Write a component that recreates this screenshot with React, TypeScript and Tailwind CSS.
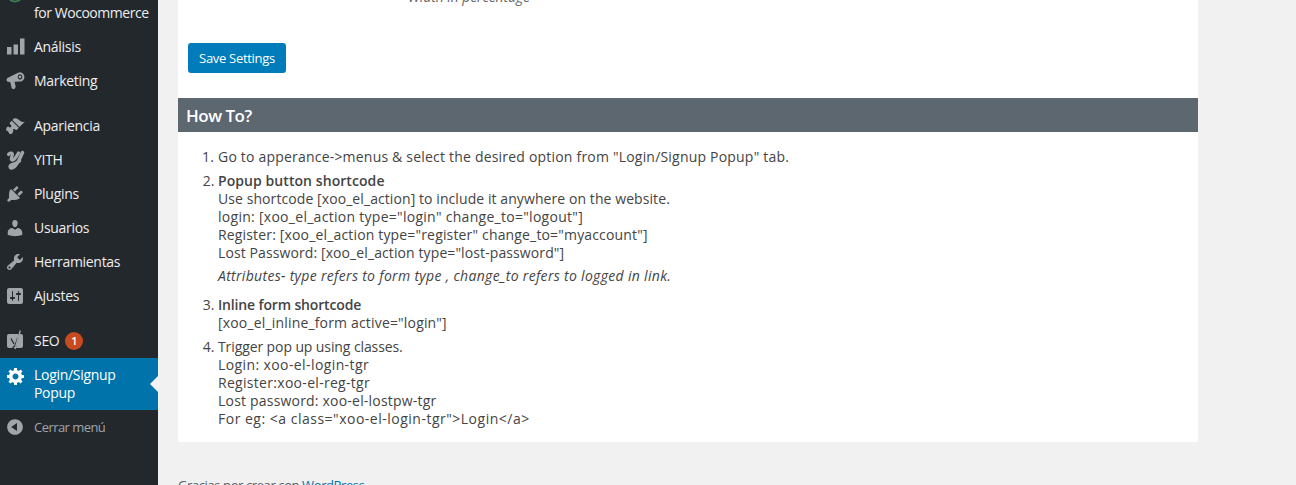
import React from "react";

const P = ({ d }: { d: string }) => <path d={d} />;

const Icon = ({ children }: { children: React.ReactNode }) => (
  <svg viewBox="0 0 20 20" className="w-5 h-5 fill-current shrink-0">{children}</svg>
);

const icons: Record<string, React.ReactNode> = {
  analytics: (
    <svg viewBox="0 0 20 20" className="w-[20px] h-[20px] fill-current shrink-0">
      <rect x="2" y="10" width="4.500" height="7.500" />
      <rect x="8.500" y="7.500" width="4.500" height="10" />
      <rect x="15" y="1.500" width="4.500" height="16" />
    </svg>
  ),
  marketing: (
    <Icon>
      <path fillRule="evenodd" d="M15 1.200c2.700 0 4.400 2.200 4.400 4.700S17.500 10.600 15 10.600L9.500 10.800 10.700 15.700 9.400 18.200 6.800 17.500 5.300 11.200 3 10.800C2 10.500 1.500 9.700 1.600 8.700 1.700 7.800 2.200 7.100 3 6.800L12.500 2zM15 3.300C13.700 3.300 12.800 4.500 12.800 5.900 12.800 7.300 13.700 8.500 15 8.500 16.300 8.500 17.300 7.300 17.300 5.900 17.300 4.500 16.300 3.300 15 3.300z" />
      <circle cx="15" cy="5.900" r="1.300" />
    </Icon>
  ),
  appearance: (
    <Icon>
      <P d="M14.480 11.060L7.410 3.990l1.500-1.500c.5-.56 2.300-.47 3.510.32 1.210.8 1.430 1.280 2.910 2.100 1.180.64 2.450 1.260 4.450.85zm-.71.71L6.700 4.700 4.930 6.470c-.39.39-.39 1.020 0 1.410l1.060 1.060c.59.56.59 1.530 0 2.120-.58.56-1.530.56-2.120 0l-.35-.35c-.35-.35-1.030-.21-1.410.35C1.500 11.700 1 13 1.300 14.700l1.500.2 1.800 3.100c1.100.3 2.200-.3 2.900-1.100.6-.7 1-1.900.6-2.900-.2-.5.1-1.100.7-1.100.8 0 1.300.4 1.800.9.400.4 1 .4 1.400 0z" />
    </Icon>
  ),
  yith: (
    <svg viewBox="0 0 20 20" className="w-5 h-5 shrink-0 fill-none stroke-current">
      <path strokeWidth="3.200" strokeLinecap="round" d="M3.500 4.500C4.500 3 6.500 2.500 7.300 3.700 8 5 6 7.500 6.300 9.300 6.600 10.800 8.500 10.300 10.300 8 11.800 6 12.800 4.500 13.500 3" />
      <path strokeWidth="3.400" strokeLinecap="round" d="M17.500 2.500C16 6 14 10.500 12 13.500 10.500 16 8.500 18.500 6 18 4.700 17.500 4.800 15.500 6.200 15 8.500 14.300 12 13 14.500 11" />
    </svg>
  ),
  plugins: (
    <Icon>
      <P d="M13.110 4.360L9.870 7.600 8 5.730l3.240-3.240c.35-.34 1.050-.2 1.560.32.52.51.66 1.210.31 1.550zm-8 1.770l.91-1.120 9.010 9.010-1.190.84c-.71.71-2.630 1.160-3.820 1.160H6.140L4.900 17.260c-.59.59-1.540.59-2.120 0-.59-.58-.59-1.530 0-2.120l1.240-1.240v-3.880c0-1.130.4-3.190 1.090-3.890zm7.260 3.970l3.240-3.240c.34-.35 1.040-.21 1.550.31.52.51.66 1.210.31 1.550l-3.240 3.250z" />
    </Icon>
  ),
  users: (
    <Icon>
      <P d="M10 9.250c-2.270 0-2.730-3.440-2.730-3.440C7 4.020 7.820 2 9.970 2c2.160 0 2.980 2.020 2.710 3.810 0 0-.41 3.440-2.680 3.440zm0 2.570L12.720 10c2.390 0 4.520 2.330 4.520 4.530v2.490s-3.650 1.130-7.240 1.130c-3.650 0-7.240-1.130-7.240-1.130v-2.490c0-2.250 1.940-4.480 4.470-4.480z" />
    </Icon>
  ),
  tools: (
    <Icon>
      <P d="M16.680 9.770c-1.340 1.340-3.300 1.670-4.950.99l-5.410 6.520c-.99.99-2.590.99-3.580 0s-.99-2.590 0-3.570l6.520-5.420c-.68-1.650-.35-3.610.99-4.950 1.280-1.280 3.120-1.620 4.720-1.060l-2.890 2.890 2.820 2.820 2.860-2.870c.53 1.580.18 3.390-1.080 4.650zM3.810 16.210c.4.39 1.040.39 1.430 0 .4-.4.4-1.040 0-1.430-.39-.4-1.030-.4-1.430 0-.39.39-.39 1.030 0 1.430z" />
    </Icon>
  ),
  settings: (
    <Icon>
      <P d="M18 16V4c0-1.100-.9-2-2-2H4c-1.100 0-2 .9-2 2v12c0 1.100.9 2 2 2h12c1.100 0 2-.9 2-2zM8 11h1c.55 0 1 .45 1 1s-.45 1-1 1H8v1.500c0 .28-.22.5-.5.5s-.5-.22-.5-.5V13H6c-.55 0-1-.45-1-1s.45-1 1-1h1V5.500c0-.28.22-.5.5-.5s.5.22.5.5V11zm5-2h-1c-.55 0-1-.45-1-1s.45-1 1-1h1V5.500c0-.28.22-.5.5-.5s.5.22.5.5V7h1c.55 0 1 .45 1 1s-.45 1-1 1h-1v5.500c0 .28-.22.5-.5.5s-.5-.22-.5-.5V9z" />
    </Icon>
  ),
  seo: (
    <svg viewBox="0 0 20 20" className="w-5 h-5 shrink-0 -translate-y-[1px]">
      <path className="fill-current" d="M4 4h9.500L11 18H4C2.800 18 2 17.200 2 16V6C2 4.800 2.800 4 4 4z" />
      <path className="fill-current" d="M14.500 4H16c1.100 0 2 .8 2 2v10c0 1.200-.9 2-2 2h-5z" />
      <path fill="none" stroke="#23282d" strokeWidth="1.300" d="M6 8.500l3 5.500M13 7.500l-3 8c-.4 1.300-1.300 1.800-2.500 1.800" />
      <path fill="none" stroke="#a0a5aa" strokeWidth="1.400" d="M15.300 .5L10 19" />
    </svg>
  ),
  gear: (
    <span className="ml-[1px]">
      <Icon>
        <P d="M18 12h-2.180c-.17.7-.44 1.350-.81 1.930l1.540 1.540-2.100 2.100-1.540-1.540c-.58.36-1.230.63-1.910.79V19H8v-2.180c-.68-.16-1.330-.43-1.910-.79l-1.540 1.540-2.120-2.120 1.540-1.540c-.36-.58-.63-1.230-.79-1.910H1V9.030h2.170c.16-.7.44-1.350.8-1.940L2.430 5.550l2.100-2.100 1.540 1.540c.58-.37 1.240-.64 1.930-.81V2h3v2.180c.68.16 1.330.43 1.910.79l1.540-1.540 2.120 2.120-1.540 1.540c.36.59.64 1.240.8 1.940H18V12zm-8.500 1.500c1.660 0 3-1.340 3-3s-1.340-3-3-3-3 1.340-3 3 1.340 3 3 3z" />
      </Icon>
    </span>
  ),
  collapse: (
    <Icon>
      <P d="M10 2.160c4.330 0 7.840 3.510 7.840 7.840s-3.510 7.840-7.840 7.840S2.160 14.330 2.160 10 5.710 2.160 10 2.160zm2 11.720V6.120L6.180 9.970z" />
    </Icon>
  ),
};

const Item = ({ icon, label, gap }: { icon: string; label: React.ReactNode; gap?: boolean }) => (
  <div className={`flex items-center h-[34px] pl-[5px] text-[#eeeeee] ${gap ? "mt-[11px]" : ""}`}>
    <span className="w-[29px] flex text-[#a0a5aa]">{icons[icon]}</span>
    <span className="leading-[18px]">{label}</span>
  </div>
);

const Sidebar = () => (
  <aside className="w-[158px] shrink-0 bg-[#23282d] pt-[4px] text-[14px] tracking-[-0.3px] overflow-hidden">
    <div className="relative flex items-center h-[26px] pb-[8px] pl-[34px] text-[#eeeeee] leading-[18px] whitespace-nowrap tracking-[-0.45px]">
      <svg viewBox="0 0 20 20" className="absolute left-[5px] top-[-20px] w-5 h-5 fill-none stroke-[#3f7d4f]" strokeWidth="2">
        <circle cx="10" cy="10" r="7.500" />
      </svg>
      for Wocoommerce
    </div>
    <Item icon="analytics" label="Análisis" />
    <Item icon="marketing" label="Marketing" />
    <Item icon="appearance" label="Apariencia" gap />
    <Item icon="yith" label="YITH" />
    <Item icon="plugins" label="Plugins" />
    <Item icon="users" label="Usuarios" />
    <Item icon="tools" label="Herramientas" />
    <Item icon="settings" label="Ajustes" />
    <div className="mt-[11px] flex items-center h-[34px] pl-[5px] text-[#eeeeee]">
      <span className="w-[29px] flex text-[#a0a5aa]">{icons.seo}</span>
      <span className="-translate-y-[1px]">SEO</span>
      <span className="ml-[6px] w-[18px] h-[18px] rounded-full bg-[#ca4a1f] text-white text-[11px] font-semibold flex items-center justify-center tracking-normal">1</span>
    </div>
    <div className="relative flex bg-[#0073aa] text-white py-[8px] pl-[5px] leading-[18px]">
      <span className="w-[29px] flex items-start">{icons.gear}</span>
      <span>Login/Signup<br />Popup</span>
      <span className="absolute right-0 top-[18px] w-0 h-0 border-y-[8px] border-y-transparent border-r-[8px] border-r-[#f1f1f1]" />
    </div>
    <div className="flex items-center h-[34px] pl-[5px] text-[#a0a5aa] text-[13px] tracking-[-0.55px]">
      <span className="w-[29px] flex">{icons.collapse}</span>
      <span className="translate-y-[1px]">Cerrar menú</span>
    </div>
  </aside>
);

const Settings = () => (
  <section className="bg-white h-[98px] shrink-0 pl-[10px]">
    <div className="pl-[220px] h-[43px] text-[14px] italic text-[#666666] leading-[18px] tracking-[-0.1px] -translate-y-[12px]">Width in percentage</div>
    <button className="block w-[98px] h-[30px] bg-[#007cba] rounded-[3px] text-white text-[13px] leading-[30px] text-center tracking-[-0.3px]">Save Settings</button>
  </section>
);

const HowTo = () => (
  <section className="bg-white h-[344px] shrink-0">
    <h2 className="bg-[#5d6770] h-[34px] pl-[8px] text-white text-[17px] font-semibold leading-[36px] tracking-[-0.5px]">How To?</h2>
    <ol className="list-decimal pl-[40px] pt-[16px] text-[14px] leading-[18px] text-[#444444] whitespace-nowrap">
      <li className="mb-[6px] tracking-[0.2px]">Go to apperance-&gt;menus &amp; select the desired option from "Login/Signup Popup" tab.</li>
      <li className="mb-[6px]">
        <strong className="block font-semibold tracking-[0.07px]">Popup button shortcode</strong>
        <span className="block tracking-[0.08px]">Use shortcode [xoo_el_action] to include it anywhere on the website.</span>
        <span className="block tracking-[0.28px]">login: [xoo_el_action type="login" change_to="logout"]</span>
        <span className="block tracking-[0.16px]">Register: [xoo_el_action type="register" change_to="myaccount"]</span>
        <span className="block tracking-[0.1px]">Lost Password: [xoo_el_action type="lost-password"]</span>
        <em className="block mt-[5px] mb-[11px] tracking-[0.31px]">Attributes- type refers to form type , change_to refers to logged in link.</em>
      </li>
      <li className="mb-[6px]">
        <strong className="block font-semibold tracking-[-0.15px]">Inline form shortcode</strong>
        <span className="block tracking-[0.17px]">[xoo_el_inline_form active="login"]</span>
      </li>
      <li>
        <span className="tracking-[-0.1px]">Trigger pop up using classes.</span>
        <span className="block tracking-[0.4px]">Login: xoo-el-login-tgr</span>
        <span className="block tracking-[0.3px]">Register:xoo-el-reg-tgr</span>
        <span className="block tracking-[0.2px]">Lost password: xoo-el-lostpw-tgr</span>
        <span className="block tracking-[0.5px]">For eg: &lt;a class="xoo-el-login-tgr"&gt;Login&lt;/a&gt;</span>
      </li>
    </ol>
  </section>
);

export default function App() {
  return (
    <div className="flex h-[485px] overflow-hidden bg-[#f1f1f1] font-['Open_Sans',sans-serif]">
      <Sidebar />
      <main className="flex-1 flex flex-col pl-[20px] pr-[98px] min-w-0">
        <Settings />
        <HowTo />
        <p className="mt-[34px] text-[13px] leading-[18px] text-[#555d66] whitespace-nowrap tracking-[-0.4px]">
          Gracias por crear con <a className="text-[#0073aa]">WordPress</a>
        </p>
      </main>
    </div>
  );
}
